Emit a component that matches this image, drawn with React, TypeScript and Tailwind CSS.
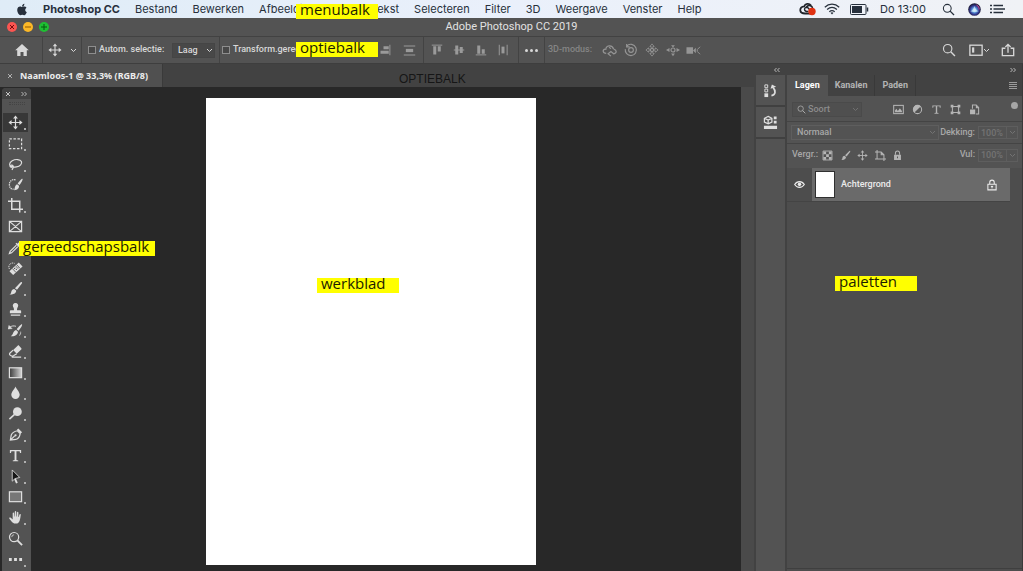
import type { ReactNode } from 'react';
import { FaApple } from 'react-icons/fa';

const menus = ['Bestand', 'Bewerken', 'Afbeelding', 'Laag', 'Tekst', 'Selecteren', 'Filter', '3D', 'Weergave', 'Venster', 'Help'];

function Svg({ size = 16, className = '', children }: { size?: number; className?: string; children: ReactNode }) {
  return (
    <svg
      width={size}
      height={size}
      viewBox="0 0 16 16"
      fill="none"
      stroke="currentColor"
      strokeWidth="1.3"
      className={`shrink-0 ${className}`}
      aria-hidden="true"
    >
      {children}
    </svg>
  );
}

function Chevron({ className = '' }: { className?: string }) {
  return (
    <svg width="7" height="5" viewBox="0 0 7 5" fill="none" stroke="currentColor" className={className} aria-hidden="true">
      <path d="M1 1l2.5 2.5L6 1" />
    </svg>
  );
}

function DoubleChevron({ left = false }: { left?: boolean }) {
  return (
    <svg width="8" height="6" viewBox="0 0 8 6" fill="none" stroke="currentColor" strokeWidth="0.9" aria-hidden="true">
      {left ? <path d="M3.5 1l-2 2 2 2M6.5 1l-2 2 2 2" /> : <path d="M1.5 1l2 2-2 2M4.5 1l2 2-2 2" />}
    </svg>
  );
}

const movePaths = (
  <>
    <path d="M8 3v10M3 8h10" />
    <path d="M8 .5l2.600 3.300H5.400zM8 15.500l2.600-3.300H5.400zM.5 8l3.300-2.600v5.200zM15.500 8l-3.300-2.600v5.200z" fill="currentColor" stroke="none" />
  </>
);

const brushPaths = (
  <path
    d="M14.8 1.2c.4.4.2 1-.2 1.600L9.600 9.400 7.400 7.600 13.200 1.700c.5-.6 1.200-.9 1.600-.5zM6.600 8.400l2.100 1.800c.2 2.200-1.700 4.600-7.200 4.200 1.600-.6 1.700-1.700 2.100-3.300.4-1.700 1.500-2.700 3-2.700z"
    fill="currentColor"
    stroke="none"
  />
);

const searchPaths = (
  <>
    <circle cx="6.500" cy="6.500" r="4.800" />
    <path d="M10 10l4.800 4.800" strokeWidth="1.600" />
  </>
);

const lockPaths = (
  <>
    <path d="M5 7V4.500a3 3 0 016 0V7" strokeWidth="1.500" />
    <path d="M3 7h10v7.500H3zM7.300 9.500v2.500h1.400V9.500z" fill="currentColor" fillRule="evenodd" stroke="none" />
  </>
);

const typePaths = <path d="M2 2h12v3.400h-1.200L12.400 3.400H9v9.400l1.900.4v1H5.100v-1l1.900-.4V3.400H3.600l-.4 2H2z" fill="currentColor" stroke="none" />;

const tools: { name: string; icon: ReactNode; single?: boolean }[] = [
  { name: 'Verplaatsen', icon: movePaths },
  { name: 'Rechthoekig selectiekader', icon: <rect x="1.500" y="3" width="13" height="10.500" strokeDasharray="2.600 1.700" /> },
  {
    name: 'Lasso',
    icon: <path d="M4 11.500C.8 9.500 1 6 4.500 4c3.500-2 8.500-1.700 9.800.8 1.200 2.500-1.500 5-5.300 5.700-2.600.5-5.200.2-5.700-.8-.4-1 1.200-1.400 1.900-.5.8 1.200.2 3-1 4.600" />
  },
  {
    name: 'Snelle selectie',
    icon: (
      <>
        <path d="M8 3C4.500 2 1.500 4.200 1.500 8c0 3.200 1.500 5 4.500 5" strokeDasharray="1.500 .8" />
        <path d="M15.500 2c.5.7-1.300 3.900-3.300 6.600L10.300 7c1.700-2.300 4.400-5.600 5.200-5zM9.700 7.700l2 1.600c.4 2.600-1.700 4.700-5.200 4.700.9-1.500.5-5.200 3.200-6.300z" fill="currentColor" stroke="none" />
      </>
    )
  },
  { name: 'Uitsnijden', icon: <path d="M4 0v12h12M0 3.500h12.500V15.500" strokeWidth="1.600" /> },
  { name: 'Kader', single: true, icon: <path d="M1.500 2.500h13v11h-13zM1.500 2.500l13 11M14.500 2.500l-13 11" /> },
  {
    name: 'Pipet',
    icon: (
      <>
        <path d="M9 5.500l-6.700 6.700L1.500 14.500l2.300-.8L10.500 7" />
        <path d="M8 4l1-1 1 1 2-2c1.800-1.500 3.500.2 2 2l-2 2 1 1-1 1z" fill="currentColor" stroke="none" />
      </>
    )
  },
  {
    name: 'Snel retoucheerpenseel',
    icon: (
      <>
        <path d="M1.500 8.500C-.5 4.500 3 1 7 2.500" strokeDasharray="1.200 .8" strokeWidth="1" />
        <path d="M1.500 10.800L11.500 1.500l4 4.300-10 9.200z" fill="currentColor" stroke="none" />
        <path d="M4.600 8l3.900 4.200M9.100 3.800l3.900 4.200" stroke="#535353" strokeWidth=".9" />
        <path d="M7 7.900h.1M8.900 8.900h.1M8.700 6.300h.1M10.500 7.400h.1" stroke="#535353" strokeLinecap="round" />
      </>
    )
  },
  { name: 'Penseel', icon: brushPaths },
  {
    name: 'Kloonstempel',
    icon: <path d="M8 1a2.800 2.800 0 012.500 4.200C9.700 6.500 9.500 7.500 9.700 8.700H13a1 1 0 011 1V12H2V9.700a1 1 0 011-1h3.300C6.500 7.500 6.300 6.500 5.500 5.200A2.800 2.800 0 018 1zM3 13.200h10v1.400H3z" fill="currentColor" stroke="none" />
  },
  {
    name: 'Historiepenseel',
    icon: (
      <>
        <path d="M15 1.500c.5.500-1.300 4-3.800 6.800L9.300 6.700C11.500 3.900 14.300.9 15 1.500zM8.600 7.500l2 1.700c0 3-3.200 5.300-7.600 4.800 2.800-1.200 2-5.500 5.600-6.500z" fill="currentColor" stroke="none" />
        <path d="M2 4.500c2-1.500 4-1.700 6.500-1" strokeWidth="1" />
        <path d="M0 6.500l1-4L4.500 6zM13.500 9c.5 2-.3 3.500-1.500 4.800" fill="currentColor" strokeWidth=".4" />
      </>
    )
  },
  {
    name: 'Gummetje',
    icon: (
      <>
        <path d="M5.500 6.500l4.800-4.700c.5-.5 1-.5 1.500 0l2.400 2.600c.4.500.4 1-.1 1.500L9.300 10.500z" fill="currentColor" stroke="none" />
        <path d="M5.500 6.500L2.400 9.300c-1 .9-1 1.700-.2 2.500.9.900 1.700 1.600 3.600.7l3.500-2M4 14h10" />
      </>
    )
  },
  {
    name: 'Verloop',
    icon: (
      <>
        <defs>
          <linearGradient id="tool-gradient">
            <stop offset="0" stopColor="#3a3a3a" />
            <stop offset="1" stopColor="#d6d6d6" />
          </linearGradient>
        </defs>
        <rect x="1.500" y="3" width="13" height="10.500" fill="url(#tool-gradient)" />
      </>
    )
  },
  { name: 'Vervagen', icon: <path d="M8 1.500c1 3 4.500 5.500 4.500 9a4.500 4.500 0 01-9 0c0-3.500 3.500-6 4.500-9z" fill="currentColor" stroke="none" /> },
  {
    name: 'Tegenhouden',
    icon: (
      <>
        <circle cx="10" cy="6" r="4.700" fill="currentColor" stroke="none" />
        <path d="M7 9l-5.500 5" strokeWidth="1.700" />
      </>
    )
  },
  {
    name: 'Pen',
    icon: (
      <>
        <path d="M2.500 14l1-5.500c1-2.500 3.200-3.800 6.500-4.500l3 3c-.5 3.300-2 5.500-4.700 6.300zM2.500 14l4.700-4.500" />
        <circle cx="8" cy="8.800" r="1.200" fill="currentColor" stroke="none" />
        <path d="M9.500 3L11 1.500 15 5.500 13.500 7z" fill="currentColor" stroke="none" />
      </>
    )
  },
  { name: 'Horizontale tekst', icon: typePaths },
  {
    name: 'Padselectie',
    icon: (
      <>
        <path d="M7.500 10.500l2 4.500" strokeWidth="2" />
        <path d="M4.500 1v12l3-2.800L12.500 9z" fill="#161616" strokeWidth=".9" />
      </>
    )
  },
  { name: 'Rechthoek', icon: <rect x="1.500" y="3" width="13" height="10.500" fill="#777777" /> },
  {
    name: 'Handje',
    icon: <path d="M5 8V3.500c0-1.100 1.500-1.100 1.500 0L6.800 7h.4V2c0-1.200 1.600-1.200 1.600 0v5h.5l.3-4.300c.1-1.100 1.500-1 1.500.1L11 7.500h.4l.8-2.700c.3-1 1.600-.7 1.400.4C13 8.500 13 14.500 8.500 14.500c-3 0-4-1.500-7-5.300-.7-1 .6-1.800 1.500-1L5 10z" fill="currentColor" stroke="none" />
  },
  {
    name: 'Zoomen',
    single: true,
    icon: (
      <>
        <circle cx="6.500" cy="6.500" r="4.900" />
        <path d="M10 10l5 5" strokeWidth="2" />
        <path d="M4 6.500A2.500 2.500 0 016.500 4" strokeWidth=".8" />
      </>
    )
  },
  { name: 'Werkbalk bewerken', icon: <path d="M1 6.500h3v3H1zM6.500 6.500h3v3h-3zM12 6.500h3v3h-3z" fill="currentColor" stroke="none" /> }
];

function Divider() {
  return <div className="h-[26px] w-px shrink-0 bg-[#434343]" />;
}

function IconButton({ label, className = '', children }: { label: string; className?: string; children: ReactNode }) {
  return (
    <button type="button" aria-label={label} className={`flex shrink-0 items-center justify-center ${className}`}>
      {children}
    </button>
  );
}

function MenuBar() {
  return (
    <nav className="flex h-[18px] items-center bg-linear-to-r from-[#dfecf7] via-[#eaf0fb] to-[#f0f2f6] pr-[18px] pl-4 font-['Inter',sans-serif] text-[11px] text-[#27303c]">
      <FaApple className="h-[13px] w-3 shrink-0" />
      <button type="button" className="ml-[15px] font-bold whitespace-nowrap">Photoshop CC</button>
      <div className="ml-[15px] flex gap-[15px]">
        {menus.map((menu) => (
          <button key={menu} type="button">{menu}</button>
        ))}
      </div>
      <div className="ml-auto flex items-center">
        <svg width="18" height="14" viewBox="0 0 18 14" fill="none" stroke="#20242a" aria-hidden="true">
          <path d="M12 3.500C10 .8 6 1.500 5.300 4.300 2.500 4.500 1 6.300 1.300 8.500 1.700 11 4 11.500 6 11.500h6" strokeWidth="1.800" />
          <path d="M9.500 9C8 10 5.500 9.300 5.500 7.300S8 4.500 9.200 6l3 3.500M7 6c1-3.500 6-3.500 6.700.5" strokeWidth="1.400" />
          <circle cx="13" cy="9.500" r="3.700" fill="#e03212" stroke="none" />
        </svg>
        <svg width="16" height="12" viewBox="0 0 16 12" fill="none" stroke="#27303c" strokeWidth="1.200" className="ml-[7px]" aria-hidden="true">
          <path d="M.8 4.200c4.200-4 10.200-4 14.400 0M3.100 6.500c3-2.700 6.800-2.700 9.800 0M5.300 8.700c1.800-1.500 3.600-1.500 5.400 0" />
          <path d="M6.500 9.700q1.500-1 3 0L8 11.500z" fill="#27303c" stroke="none" />
        </svg>
        <svg width="19" height="11" viewBox="0 0 19 11" fill="none" stroke="#27303c" className="ml-[10px]" aria-hidden="true">
          <rect x=".5" y=".5" width="15.500" height="10" rx="1" />
          <path d="M2 2h10v7H2z" fill="#27303c" stroke="none" />
          <path d="M17.500 3.500v4" strokeWidth="1.500" />
        </svg>
        <span className="ml-[11px] whitespace-nowrap">Do 13:00</span>
        <IconButton label="Zoek" className="ml-4 w-3">
          <Svg size={13}>{searchPaths}</Svg>
        </IconButton>
        <svg width="13" height="13" viewBox="0 0 13 13" className="ml-[14px]" aria-hidden="true">
          <defs>
            <radialGradient id="siri" cx=".5" cy=".55">
              <stop offset="0" stopColor="#e8f6ff" />
              <stop offset=".35" stopColor="#5b9de0" />
              <stop offset=".7" stopColor="#343a91" />
              <stop offset="1" stopColor="#1b1a38" />
            </radialGradient>
          </defs>
          <circle cx="6.500" cy="6.500" r="6.300" fill="url(#siri)" />
          <path d="M2 8c2 0 3-1 4.500-5C7.500 6.500 9 8 11 8 8.500 9.500 4.500 9.500 2 8z" fill="#d9f1fb" opacity=".7" />
          <path d="M8.500 2c2 1 3 3 2.500 4.500" stroke="#d5498c" fill="none" />
        </svg>
        <svg width="15" height="10" viewBox="0 0 15 10" stroke="#27303c" strokeWidth="1.300" className="ml-[9px]" aria-hidden="true">
          <path d="M0 1.500h2M0 5h2M0 8.500h2M3.500 1.500H13M3.500 5H15M3.500 8.500H13" />
        </svg>
      </div>
    </nav>
  );
}

function TitleBar() {
  return (
    <header className="relative flex h-[19px] items-center justify-center border-b border-[#424242] bg-[#535353] text-[11px] text-[#e2e2e2]">
      <div className="absolute left-[7px] flex gap-[6px]">
        <button type="button" aria-label="Sluiten" className="size-[10px] rounded-full bg-[#fb5551]">
          <svg viewBox="0 0 10 10" stroke="#7a0a0a" aria-hidden="true"><path d="M3 3l4 4M7 3L3 7" /></svg>
        </button>
        <button type="button" aria-label="Minimaliseren" className="size-[10px] rounded-full bg-[#fcb827]">
          <svg viewBox="0 0 10 10" stroke="#8f5600" aria-hidden="true"><path d="M2 5h6" /></svg>
        </button>
        <button type="button" aria-label="Vergroten" className="size-[10px] rounded-full bg-[#1fbf33]">
          <svg viewBox="0 0 10 10" stroke="#04590f" aria-hidden="true"><path d="M2 5h6M5 2v6" /></svg>
        </button>
      </div>
      <h1>Adobe Photoshop CC 2019</h1>
    </header>
  );
}

function OptionsBar() {
  return (
    <div className="flex h-[27px] items-center border-b border-[#3e3e3e] bg-[#535353] pr-2 text-[9px] font-medium text-[#d8d8d8]">
      <IconButton label="Home" className="ml-[14px] w-4">
        <Svg>
          <path d="M8 2l6.800 6.300h-2V14H9.500v-4h-3v4H3.200V8.300h-2z" fill="currentColor" stroke="none" />
        </Svg>
      </IconButton>
      <div className="ml-3"><Divider /></div>
      <IconButton label="Verplaatsen" className="ml-1 w-[30px] gap-2">
        <Svg size={14}>{movePaths}</Svg>
        <Chevron />
      </IconButton>
      <div className="ml-1"><Divider /></div>
      <label className="ml-[6px] flex w-[84px] items-center gap-[3px] whitespace-nowrap">
        <input type="checkbox" className="size-2 appearance-none border border-[#8e8e8e] bg-[#484848]" />
        Autom. selectie:
      </label>
      <div className="relative flex items-center">
        <select aria-label="Autom. selectie" className="h-[15px] w-[43px] appearance-none border border-[#454545] bg-[#484848] pl-[5px] leading-none">
          <option>Laag</option>
        </select>
        <Chevron className="pointer-events-none absolute right-[2px]" />
      </div>
      <div className="ml-1"><Divider /></div>
      <label className="ml-[2px] flex w-[113px] items-center gap-[3px] whitespace-nowrap">
        <input type="checkbox" className="size-2 appearance-none border border-[#8e8e8e] bg-[#484848]" />
        Transform.gereedsch.
      </label>
      <div className="flex text-[#9a9a9a]">
        <IconButton label="Links uitlijnen" className="w-5">
          <Svg size={12}><path d="M1 1v14" /><path d="M3 3h7v4H3zM3 9h11v4H3z" fill="currentColor" stroke="none" /></Svg>
        </IconButton>
        <IconButton label="Horizontaal centreren" className="w-5">
          <Svg size={12}><path d="M8 1v14" /><path d="M4 3h8v4H4zM2 9h12v4H2z" fill="currentColor" stroke="none" /></Svg>
        </IconButton>
        <IconButton label="Rechts uitlijnen" className="w-5">
          <Svg size={12}><path d="M14.500 1v14" /><path d="M6 3h7v4H6zM2 9h11v4H2z" fill="currentColor" stroke="none" /></Svg>
        </IconButton>
        <IconButton label="Verdelen" className="ml-[2px] w-6">
          <Svg size={13}><path d="M1 2.500h14M1 13.500h14" /><path d="M3.500 6h9v4h-9z" fill="currentColor" stroke="none" /></Svg>
        </IconButton>
      </div>
      <div className="ml-[2px]"><Divider /></div>
      <div className="ml-[2px] flex text-[#9a9a9a]">
        <IconButton label="Boven uitlijnen" className="w-[22px]">
          <Svg size={12}><path d="M1 1.500h14" /><path d="M3 3h4v11H3zM9 3h4v7H9z" fill="currentColor" stroke="none" /></Svg>
        </IconButton>
        <IconButton label="Verticaal centreren" className="w-[22px]">
          <Svg size={12}><path d="M1 8h14" /><path d="M3 2h4v12H3zM9 4h4v8H9z" fill="currentColor" stroke="none" /></Svg>
        </IconButton>
        <IconButton label="Onder uitlijnen" className="w-[22px]">
          <Svg size={12}><path d="M1 14.500h14" /><path d="M3 2h4v11H3zM9 7h4v6H9z" fill="currentColor" stroke="none" /></Svg>
        </IconButton>
        <IconButton label="Horizontaal verdelen" className="w-[22px]">
          <Svg size={12}><path d="M3 1v14M13.500 1v14" /><path d="M6 3.500h4v9H6z" fill="currentColor" stroke="none" /></Svg>
        </IconButton>
      </div>
      <div className="ml-1"><Divider /></div>
      <IconButton label="Meer opties" className="w-[25px]">
        <svg width="13" height="3" viewBox="0 0 13 3" fill="currentColor" aria-hidden="true">
          <circle cx="1.500" cy="1.500" r="1.500" /><circle cx="6.500" cy="1.500" r="1.500" /><circle cx="11.500" cy="1.500" r="1.500" />
        </svg>
      </IconButton>
      <Divider />
      <span className="ml-[3px] whitespace-nowrap text-[#858585]">3D-modus:</span>
      <div className="ml-[7px] flex text-[#959595]">
        <IconButton label="3D roteren" className="w-[21px]">
          <Svg size={15}>
            <path d="M4.500 11C.5 11 .3 7 3.500 6.500M12.500 6.500c3.500 1 3.500 4.500 0 5l-3-2.500-3 2.500 3 2.500" />
            <path d="M4 7.500C4 2 11 1.500 12.300 6.500M7.500 4.500l2 1.500" />
          </Svg>
        </IconButton>
        <IconButton label="3D rollen" className="w-[21px]">
          <Svg size={14}><circle cx="8" cy="8" r="2.700" /><path d="M3 3.500A6.500 6.500 0 118 14.500 6.500 6.500 0 011.500 7M3 1v3.500h3.500" /></Svg>
        </IconButton>
        <IconButton label="3D pannen" className="w-[21px]">
          <Svg size={14}>
            <circle cx="8" cy="8" r="1.800" />
            <path d="M8 1l2.500 3H9v2H7V4H5.500zM8 15l2.500-3H9v-2H7v2H5.500zM1 8l3-2.500V7h2v2H4v1.500zM15 8l-3-2.500V7h-2v2h2v1.500z" strokeWidth=".9" />
          </Svg>
        </IconButton>
        <IconButton label="3D schuiven" className="w-[21px]">
          <Svg size={14}>
            <circle cx="8" cy="8" r="2.300" />
            <path d="M8 5L5.800 2.500h4.400zM8 15l-2.200-3h4.400zM0 8l4-2.300v4.600zM16 8l-4-2.300v4.600z" fill="currentColor" stroke="none" />
          </Svg>
        </IconButton>
        <IconButton label="3D camera" className="w-[21px]">
          <Svg size={15}>
            <path d="M.5 4.500h7v7h-7zM7.500 8l3-3v6z" fill="currentColor" stroke="none" />
            <path d="M15 4l-3 3v2l3 3" strokeWidth="1" />
          </Svg>
        </IconButton>
      </div>
      <div className="ml-auto flex items-center">
        <IconButton label="Zoeken" className="w-4">
          <Svg size={14}>{searchPaths}</Svg>
        </IconButton>
        <IconButton label="Werkruimte" className="ml-2 w-7 justify-between">
          <Svg size={14}>
            <rect x="1" y="2.500" width="14" height="11.500" strokeWidth="1.500" />
            <path d="M3.500 5h2.500v6H3.500z" fill="currentColor" stroke="none" />
          </Svg>
          <Chevron />
        </IconButton>
        <IconButton label="Delen" className="ml-2 w-[14px]">
          <Svg size={14}><path d="M5 6H1.500v8.500h13V6H11M8 11V2M5 4.500l3-3 3 3" strokeWidth="1.500" /></Svg>
        </IconButton>
      </div>
    </div>
  );
}

function Toolbar() {
  return (
    <aside className="mt-px ml-[2px] flex w-[29px] shrink-0 flex-col rounded-t bg-[#535353] text-[#dedede]">
      <div className="flex h-[11px] items-center justify-between rounded-t bg-[#424242] px-[3px] text-[#c4c4c4]">
        <button type="button" aria-label="Werkbalk sluiten">
          <svg width="6" height="6" viewBox="0 0 6 6" stroke="currentColor" aria-hidden="true"><path d="M1 1l4 4M5 1L1 5" /></svg>
        </button>
        <button type="button" aria-label="Uitvouwen"><DoubleChevron /></button>
      </div>
      <div className="mx-auto mt-[3px] h-[3px] w-4 shrink-0 border-y border-dotted border-[#444444]" />
      <div className="mt-2 flex flex-1 flex-col items-center justify-between pr-[2px] pb-[2px]">
        {tools.map((tool, i) => (
          <button
            key={tool.name}
            type="button"
            aria-label={tool.name}
            className={`relative flex h-[19px] w-[25px] items-center justify-center ${i === 0 ? 'bg-[#383838]' : ''}`}
          >
            <Svg size={15}>{tool.icon}</Svg>
            {!tool.single && <span className="absolute right-[2px] bottom-[2px] size-[2px] bg-[#b0b0b0]" />}
          </button>
        ))}
      </div>
    </aside>
  );
}

function Document() {
  return (
    <main className="flex min-w-0 flex-1 flex-col bg-[#282828]">
      <div className="flex h-[23px] bg-[#424242] font-['Noto_Sans',sans-serif] text-[9px] font-bold text-[#ececec]">
        <div className="flex w-[163px] items-center gap-[7px] border-r border-[#3a3a3a] bg-[#505050] pl-[7px] whitespace-nowrap">
          <button type="button" aria-label="Tabblad sluiten">
            <svg width="6" height="6" viewBox="0 0 6 6" stroke="#b0b0b0" aria-hidden="true"><path d="M1 1l4 4M5 1L1 5" /></svg>
          </button>
          Naamloos-1 @ 33,3% (RGB/8)
        </div>
      </div>
      <div className="relative flex flex-1">
        <Toolbar />
        <div className="absolute inset-x-0 top-[11px] mx-auto aspect-[330/467] w-[330px] bg-white" />
      </div>
    </main>
  );
}

function Dock() {
  return (
    <aside className="flex w-[46px] shrink-0 flex-col bg-[#424242]">
      <div className="flex h-[11px] items-center justify-end pr-[6px] text-[#c4c4c4]">
        <button type="button" aria-label="Deelvensters uitvouwen"><DoubleChevron left /></button>
      </div>
      <div className="flex flex-1">
        <div className="mt-3 w-[13px] bg-[#4a4a4a]" />
        <div className="ml-[2px] flex w-[29px] flex-col bg-[#535353] text-[#dedede]">
          <IconButton label="Historie" className="h-8 border-b-2 border-[#404040]">
            <Svg size={15}>
              <path d="M2 2h3v3H2zM2 6.500h3v3H2z" strokeWidth="1" />
              <path d="M1.500 11h4v4h-4z" fill="currentColor" stroke="none" />
              <path d="M9 13.500c4.500-1 5-5 1.800-8.500" strokeWidth="1.800" />
              <path d="M8 6l1.500-4.500L14 4z" fill="currentColor" stroke="none" />
            </Svg>
          </IconButton>
          <IconButton label="Bibliotheken" className="h-8 border-b-2 border-[#404040]">
            <Svg size={15}>
              <path d="M5.500 1.500l4 2v4l-4 2-4-2v-4zM1.500 3.500l4 2 4-2M5.500 5.500v4" strokeWidth="1.300" />
              <path d="M11.500 1.500h3v3h-3zM11.500 6h3v3h-3zM1 11.500h14V15H1z" fill="currentColor" stroke="none" />
            </Svg>
          </IconButton>
        </div>
      </div>
    </aside>
  );
}

function Amount({ label }: { label: string }) {
  return (
    <label className="ml-auto flex items-center gap-[3px] text-[#a8a8a8]">
      {label}
      <span className="flex h-[13px] w-10 items-center border border-[#5e5e5e] text-[#737373]">
        <input defaultValue="100%" className="h-full w-[28px] border-r border-[#5e5e5e] pl-[2px] leading-none" />
        <Chevron className="ml-[2px]" />
      </span>
    </label>
  );
}

function LayersPanel() {
  return (
    <aside className="flex w-[236px] shrink-0 flex-col border-r border-[#3a3a3a] bg-[#535353] text-[9px] font-medium text-[#a8a8a8]">
      <div className="flex h-[11px] items-center justify-end bg-[#424242] pr-[5px] text-[#c4c4c4]">
        <button type="button" aria-label="Deelvensters samenvouwen"><DoubleChevron /></button>
      </div>
      <div className="flex h-[21px] items-stretch bg-[#424242] pr-[5px] font-bold text-[#b4b4b4]">
        <button type="button" className="bg-[#535353] px-2 text-white">Lagen</button>
        <button type="button" className="border-r border-[#393939] px-[7px]">Kanalen</button>
        <button type="button" className="border-r border-[#393939] px-[7px]">Paden</button>
        <button type="button" aria-label="Menu Lagen" className="ml-auto">
          <svg width="8" height="7" viewBox="0 0 8 7" stroke="#9b9b9b" aria-hidden="true"><path d="M0 .5h8M0 2.500h8M0 4.500h8M0 6.500h8" /></svg>
        </button>
      </div>
      <div className="flex h-[26px] items-center border-b border-[#444444] pt-[2px] pr-1 pl-[5px]">
        <div className="relative flex items-center text-[#8c8c8c]">
          <select aria-label="Filter" className="h-[15px] w-[70px] appearance-none border border-[#4a4a4a] bg-[#4f4f4f] pl-[15px] leading-none">
            <option>Soort</option>
          </select>
          <Svg size={9} className="pointer-events-none absolute left-[5px] text-[#b5b5b5]">{searchPaths}</Svg>
          <Chevron className="pointer-events-none absolute right-[3px] text-[#707070]" />
        </div>
        <div className="ml-[27px] flex text-[#b5b5b5]">
          <IconButton label="Pixellagen" className="w-[19px]">
            <Svg size={11}><rect x="1" y="2" width="14" height="12" strokeWidth="1.500" /><path d="M3 12V9l2-2 2 3 3-4 3 4v2z" fill="currentColor" stroke="none" /></Svg>
          </IconButton>
          <IconButton label="Aanpassingslagen" className="w-[19px]">
            <Svg size={11}><circle cx="8" cy="8" r="6" strokeWidth="1.500" /><path d="M3.500 12.500a6.300 6.300 0 119-9z" fill="currentColor" stroke="none" /></Svg>
          </IconButton>
          <IconButton label="Tekstlagen" className="w-[19px]">
            <Svg size={11}>{typePaths}</Svg>
          </IconButton>
          <IconButton label="Vormlagen" className="w-[19px]">
            <Svg size={11}><path d="M3.500 3.500h9v9h-9z" strokeWidth="1.500" /><path d="M1 1h4v4H1zM11 1h4v4h-4zM1 11h4v4H1zM11 11h4v4h-4z" fill="currentColor" stroke="none" /></Svg>
          </IconButton>
          <IconButton label="Slimme objecten" className="w-[19px]">
            <Svg size={11}><path d="M5 7V1.500h5.500L14 5v9.500h-4" strokeWidth="1.500" /><path d="M1.500 8H9v7H1.500zM10 1v5h4z" fill="currentColor" stroke="none" /></Svg>
          </IconButton>
        </div>
        <button type="button" aria-label="Filteren aan/uit" className="mb-2 ml-auto size-[7px] rounded-full bg-[#a6a6a6]" />
      </div>
      <div className="flex h-[22px] items-center border-b border-[#444444] pr-1 pl-1">
        <div className="relative flex items-center">
          <select aria-label="Overvloeimodus" className="h-[15px] w-[148px] appearance-none border border-[#5e5e5e] pl-[5px] leading-none">
            <option>Normaal</option>
          </select>
          <Chevron className="pointer-events-none absolute right-[3px] text-[#737373]" />
        </div>
        <Amount label="Dekking:" />
      </div>
      <div className="flex h-6 items-center pr-1 pb-[2px] pl-[5px]">
        Vergr.:
        <div className="flex text-[#b5b5b5]">
          <IconButton label="Transparante pixels vergrendelen" className="w-[18px]">
            <Svg size={11}><path d="M1.500 1.500h13v13h-13z" /><path d="M2 2h4v4H2zM10 2h4v4h-4zM6 6h4v4H6zM2 10h4v4H2zM10 10h4v4h-4z" fill="currentColor" stroke="none" /></Svg>
          </IconButton>
          <IconButton label="Afbeeldingspixels vergrendelen" className="w-[18px]">
            <Svg size={11}>{brushPaths}</Svg>
          </IconButton>
          <IconButton label="Positie vergrendelen" className="w-[17px]">
            <Svg size={11}>{movePaths}</Svg>
          </IconButton>
          <IconButton label="Tekengebied vergrendelen" className="w-[18px]">
            <Svg size={11}><path d="M3 0v13M0 3h9l4 4v9M0 13h16M9 3v4h4" strokeWidth="1.500" /></Svg>
          </IconButton>
          <IconButton label="Alles vergrendelen" className="w-[17px]">
            <Svg size={11}>{lockPaths}</Svg>
          </IconButton>
        </div>
        <Amount label="Vul:" />
      </div>
      <div className="flex flex-1 flex-col bg-[#4d4d4d] pr-3">
        <div className="flex h-[33px] text-[#ececec]">
          <IconButton label="Zichtbaarheid" className="w-[25px]">
            <Svg size={11}>
              <path d="M1 8c3.500-5.500 10.500-5.500 14 0-3.500 5.500-10.500 5.500-14 0z" strokeWidth="1.700" />
              <circle cx="8" cy="7.800" r="2.600" fill="currentColor" stroke="none" />
            </Svg>
          </IconButton>
          <div className="flex flex-1 items-center bg-[#6a6a6a] pr-3 pl-[3px]">
            <div className="h-[27px] w-5 border border-[#303030] bg-white" />
            <span className="ml-[6px]">Achtergrond</span>
            <Svg size={12} className="ml-auto">
              <path d="M5 7V4.500a3 3 0 016 0V7M2.500 7h11v7.500h-11z" strokeWidth="1.400" />
              <path d="M8 9v3.500M6.500 10h3" />
            </Svg>
          </div>
        </div>
        <div className="border-b border-[#444444]" />
      </div>
      <div className="h-[3px] border-t border-[#3f3f3f] bg-[#4d4d4d]" />
    </aside>
  );
}

function Note({ className, children }: { className: string; children: ReactNode }) {
  return (
    <div className={`absolute h-[15px] bg-[#ffff00] pl-1 font-['Open_Sans',sans-serif] text-[15px] leading-[10px] whitespace-nowrap text-[#1c1c00] ${className}`}>
      {children}
    </div>
  );
}

export default function App() {
  return (
    <div className="relative flex min-h-screen flex-col overflow-hidden bg-[#424242] font-['Roboto',sans-serif]">
      <MenuBar />
      <TitleBar />
      <OptionsBar />
      <div className="flex flex-1">
        <Document />
        <Dock />
        <LayersPanel />
      </div>
      <Note className="top-1 left-[296px] w-[82px]">menubalk</Note>
      <Note className="top-[42px] left-[296px] w-[82px]">optiebalk</Note>
      <Note className="top-[241px] left-[19px] w-[136px]">gereedschapsbalk</Note>
      <Note className="top-[278px] left-[317px] w-[82px]">werkblad</Note>
      <Note className="top-[276px] left-[835px] w-[82px]">paletten</Note>
      <div className="absolute top-[71px] left-[399px] font-['Liberation_Sans',sans-serif] text-[12px] leading-4 text-[#161616]">OPTIEBALK</div>
    </div>
  );
}
